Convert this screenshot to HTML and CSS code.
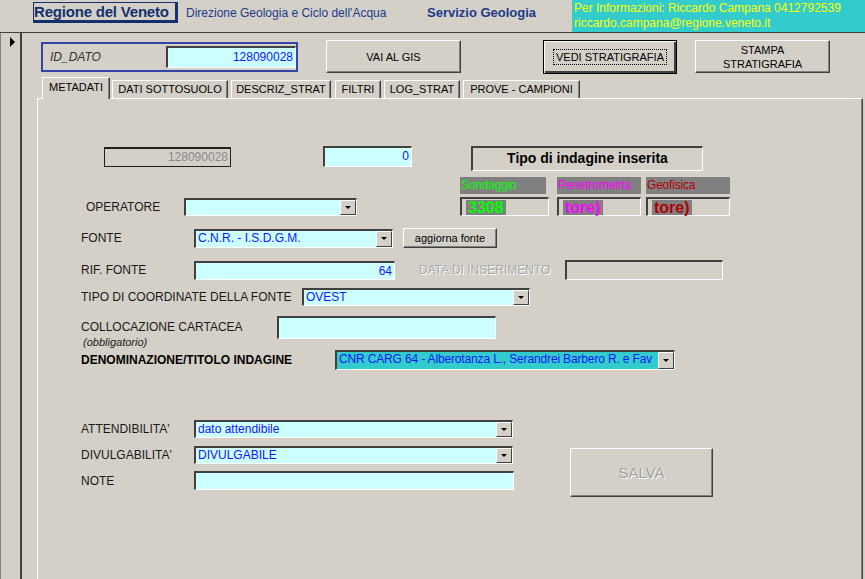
FILE: index.html
```html
<!DOCTYPE html>
<html lang="it">
<head>
    <meta charset="UTF-8">
    <title>Metadati</title>
    <link rel="stylesheet" href="styles.css">
</head>
<body>
<div class="header">
    <div class="brand">Regione del Veneto</div>
    <div class="dept">Direzione Geologia e Ciclo dell'Acqua</div>
    <div class="service">Servizio Geologia</div>
    <div class="info">Per Informazioni: Riccardo Campana 0412792539<br>riccardo.campana@regione.veneto.it</div>
</div>
<div class="main">
    <div class="selector"><span class="selector_arrow"></span></div>
    <div class="form">
        <div class="toolbar">
            <div class="id_box">
                <span class="id_label">ID_DATO</span>
                <span class="field field_id">128090028</span>
            </div>
            <button class="btn btn_gis">VAI AL GIS</button>
            <button class="btn btn_vedi"><span class="focus">VEDI STRATIGRAFIA</span></button>
            <button class="btn btn_stampa">STAMPA<br>STRATIGRAFIA</button>
        </div>
        <ul class="tabs">
            <li class="tab tab_active tab_meta">METADATI</li>
            <li class="tab tab_dati">DATI SOTTOSUOLO</li>
            <li class="tab tab_descr">DESCRIZ_STRAT</li>
            <li class="tab tab_filtri">FILTRI</li>
            <li class="tab tab_log">LOG_STRAT</li>
            <li class="tab tab_prove">PROVE - CAMPIONI</li>
        </ul>
        <div class="panel">
            <div class="row row_ids">
                <span class="field field_off">128090028</span>
                <span class="field field_count">0</span>
                <div class="tipo">Tipo di indagine inserita</div>
            </div>

            <div class="row row_operatore">
                <div class="pair pair_operatore">
                    <span class="lbl lbl_operatore">OPERATORE</span>
                    <div class="combo combo_operatore"><span class="combo_text"></span><span class="combo_drop"></span></div>
                </div>
                <div class="kinds">
                    <div class="kind kind_sond">
                        <div class="kind_head">Sondaggio</div>
                        <div class="kind_value"><span>3308</span></div>
                    </div>
                    <div class="kind kind_pen">
                        <div class="kind_head">Penetrometria</div>
                        <div class="kind_value"><span>tore)</span></div>
                    </div>
                    <div class="kind kind_geo">
                        <div class="kind_head">Geofisica</div>
                        <div class="kind_value"><span>tore)</span></div>
                    </div>
                </div>
            </div>

            <div class="row row_fonte">
                <span class="lbl">FONTE</span>
                <div class="combo combo_fonte"><span class="combo_text">C.N.R. - I.S.D.G.M.</span><span class="combo_drop"></span></div>
                <button class="btn btn_small">aggiorna fonte</button>
            </div>

            <div class="row row_rif">
                <span class="lbl">RIF. FONTE</span>
                <span class="field field_rif">64</span>
                <span class="lbl lbl_off">DATA DI INSERIMENTO</span>
                <span class="field field_data"></span>
            </div>

            <div class="row row_coord">
                <span class="lbl lbl_coord">TIPO DI COORDINATE DELLA FONTE</span>
                <div class="combo combo_coord"><span class="combo_text">OVEST</span><span class="combo_drop"></span></div>
            </div>

            <div class="row row_colloc">
                <div class="lbl lbl_colloc">
                    COLLOCAZIONE CARTACEA
                    <em>(obbligatorio)</em>
                </div>
                <span class="field field_colloc"></span>
            </div>

            <div class="row row_denom">
                <span class="lbl lbl_denom">DENOMINAZIONE/TITOLO INDAGINE</span>
                <div class="combo combo_denom"><span class="combo_text">CNR CARG 64 - Alberotanza L., Serandrei Barbero R. e Fav</span><span class="combo_drop"></span></div>
            </div>

            <div class="bottom">
                <div class="bottom_left">
                    <div class="row row_att">
                        <span class="lbl">ATTENDIBILITA'</span>
                        <div class="combo combo_wide"><span class="combo_text">dato attendibile</span><span class="combo_drop"></span></div>
                    </div>
                    <div class="row row_div">
                        <span class="lbl">DIVULGABILITA'</span>
                        <div class="combo combo_wide"><span class="combo_text">DIVULGABILE</span><span class="combo_drop"></span></div>
                    </div>
                    <div class="row row_note">
                        <span class="lbl">NOTE</span>
                        <span class="field field_note"></span>
                    </div>
                </div>
                <button class="btn btn_salva">SALVA</button>
            </div>
        </div>
    </div>
</div>
</body>
</html>
```

FILE: styles.css
```css
* {
    margin: 0;
    padding: 0;
    box-sizing: border-box;
}
body {
    width: 865px;
    height: 579px;
    overflow: hidden;
    background: #d4d0c8;
    font-family: "Liberation Sans", Arial, sans-serif;
    font-size: 12px;
    color: #1a1a1a;
}
ul, li {
    list-style: none;
}

/* header */
.header {
    display: flex;
    align-items: flex-start;
    height: 33px;
    border-bottom: 1px solid #404040;
}
.header .brand {
    margin: 2px 0 0 33px;
    width: 145px;
    height: 21px;
    line-height: 18px;
    font-size: 15px;
    font-weight: bold;
    letter-spacing: -0.2px;
    color: #13306e;
    border: 1px solid #13306e;
    border-right-width: 3px;
    border-bottom-width: 3px;
}
.header .dept {
    margin: 6px 0 0 8px;
    width: 241px;
    font-size: 12px;
    color: #1c3a8a;
}
.header .service {
    margin-top: 5px;
    font-size: 13px;
    font-weight: bold;
    color: #1c3a8a;
}
.header .info {
    margin-left: auto;
    width: 293px;
    height: 32px;
    padding: 1px 0 0 2px;
    background: #33cccc;
    color: #ffff00;
    font-size: 12px;
    line-height: 15px;
}

/* main area */
.main {
    display: flex;
    height: 546px;
}
.selector {
    width: 22px;
    border-left: 1px solid #808080;
    border-right: 2px solid #404040;
}
.selector_arrow {
    display: block;
    width: 0;
    height: 0;
    margin: 4px 0 0 9px;
    border-left: 5px solid #000;
    border-top: 5px solid transparent;
    border-bottom: 5px solid transparent;
}
.form {
    flex: 1;
    display: flex;
    flex-direction: column;
}

/* common controls */
.btn {
    font-family: "Liberation Sans", Arial, sans-serif;
    font-size: 11px;
    color: #000;
    background: #d4d0c8;
    border: 1px solid;
    border-color: #fff #404040 #404040 #fff;
    box-shadow: inset -1px -1px 0 #808080;
}
.field, .combo {
    display: block;
    border-style: solid;
    border-width: 2px 1px 1px 2px;
    border-color: #404040 #fff #fff #404040;
    background: #ccffff;
    color: #1414ff;
    font-size: 12px;
}
.field {
    text-align: right;
    padding-right: 2px;
    line-height: 16px;
}
.combo {
    display: flex;
}
.combo_text {
    flex: 1;
    padding-left: 2px;
    white-space: nowrap;
    overflow: hidden;
    line-height: 15px;
}
.combo_drop {
    width: 16px;
    display: flex;
    align-items: center;
    justify-content: center;
    background: #d4d0c8;
    border: 1px solid;
    border-color: #fff #404040 #404040 #fff;
}
.combo_drop::after {
    content: "";
    border-top: 3px solid #000;
    border-left: 3px solid transparent;
    border-right: 3px solid transparent;
}
.lbl {
    width: 113px;
    font-size: 12px;
    color: #1a1a1a;
}

/* toolbar */
.toolbar {
    display: flex;
    align-items: flex-start;
    height: 34px;
    margin: 7px 0 0 19px;
}
.id_box {
    display: flex;
    align-items: center;
    margin-top: 2px;
    width: 257px;
    height: 30px;
    border: 2px solid #3343a8;
}
.id_label {
    width: 123px;
    padding-left: 7px;
    font-style: italic;
    color: #303030;
}
.field_id {
    width: 130px;
    height: 22px;
    line-height: 18px;
}
.btn_gis {
    margin-left: 28px;
    width: 135px;
    height: 33px;
}
.btn_vedi {
    margin-left: 82px;
    width: 134px;
    height: 34px;
    border: 1px solid #000;
    box-shadow: inset 1px 1px 0 #fff, inset -2px -2px 0 #404040;
}
.btn_vedi .focus {
    display: inline-block;
    padding: 1px 2px;
    border: 1px dotted #000;
}
.btn_stampa {
    margin-left: 18px;
    width: 135px;
    height: 33px;
    line-height: 14px;
}

/* tabs */
.tabs {
    display: flex;
    align-items: flex-end;
    height: 21px;
    margin: 3px 0 0 20px;
    position: relative;
    z-index: 1;
}
.tab {
    height: 18px;
    margin-left: 3px;
    border: 1px solid;
    border-color: #fff #404040 transparent #fff;
    border-bottom: none;
    box-shadow: inset -1px 0 0 #808080;
    font-size: 11px;
    line-height: 17px;
    text-align: center;
    color: #000;
}
.tab_active {
    height: 22px;
    margin-bottom: -1px;
    margin-left: 0;
    line-height: 18px;
    background: #d4d0c8;
}
.tab_meta { width: 68px; }
.tab_dati { width: 116px; margin-left: 2px; }
.tab_descr { width: 100px; }
.tab_filtri { width: 46px; margin-left: 4px; }
.tab_log { width: 76px; }
.tab_prove { width: 117px; }

.panel {
    flex: 1;
    margin-left: 15px;
    width: 826px;
    border-top: 1px solid #fff;
    border-left: 1px solid #fff;
    border-right: 1px solid #404040;
    box-shadow: inset -1px 0 0 #808080;
}

/* panel rows */
.row {
    display: flex;
    align-items: center;
    margin-left: 43px;
}
.row_ids {
    align-items: flex-start;
    margin: 47px 0 0 66px;
    height: 25px;
}
.field_off {
    margin-top: 1px;
    width: 127px;
    height: 20px;
    border: 1px solid #202020;
    border-top-width: 2px;
    background: #d4d0c8;
    color: #8a8a8a;
}
.field_count {
    margin-left: 92px;
    width: 89px;
    height: 21px;
}
.tipo {
    margin-left: 59px;
    width: 232px;
    height: 25px;
    border-style: solid;
    border-width: 2px 1px 1px 2px;
    border-color: #404040 #fff #fff #404040;
    font-size: 14px;
    font-weight: bold;
    line-height: 20px;
    text-align: center;
    color: #000;
}

.row_operatore {
    align-items: flex-end;
    margin: 6px 0 0 48px;
}
.pair {
    display: flex;
    align-items: center;
}
.lbl_operatore {
    width: 98px;
}
.combo_operatore {
    width: 173px;
    height: 18px;
}
.kinds {
    display: flex;
    margin-left: 103px;
}
.kind_sond { width: 89px; }
.kind_pen { width: 84px; margin-left: 8px; }
.kind_geo { width: 84px; margin-left: 5px; }
.kind_head {
    height: 17px;
    padding-left: 1px;
    background: #808080;
    font-size: 12px;
    line-height: 17px;
    letter-spacing: -0.2px;
}
.kind_sond .kind_head { width: 86px; color: #00ff00; }
.kind_pen .kind_head { color: #ff00ff; }
.kind_geo .kind_head { color: #b00000; }
.kind_value {
    height: 19px;
    margin-top: 3px;
    padding: 1px 0 0 4px;
    border-style: solid;
    border-width: 2px 1px 1px 2px;
    border-color: #404040 #fff #fff #404040;
}
.kind_value span {
    display: inline-block;
    height: 15px;
    padding: 0 2px;
    background: #808080;
    font-size: 16px;
    font-weight: bold;
    line-height: 15px;
}
.kind_sond .kind_value span { color: #00ff00; }
.kind_pen .kind_value span { color: #ff00ff; }
.kind_geo .kind_value span { color: #b00000; }

.row_fonte {
    margin-top: 12px;
    height: 20px;
}
.combo_fonte {
    width: 199px;
    height: 19px;
}
.btn_small {
    margin-left: 10px;
    width: 94px;
    height: 20px;
}

.row_rif {
    margin-top: 12px;
    height: 20px;
}
.field_rif {
    width: 201px;
    height: 19px;
}
.lbl_off {
    margin-left: 24px;
    width: 146px;
    color: #a8a8a8;
    text-shadow: 1px 1px 0 #fff;
}
.field_data {
    width: 158px;
    height: 20px;
    background: #d4d0c8;
}

.row_coord {
    margin-top: 8px;
    height: 18px;
}
.lbl_coord {
    width: 221px;
}
.combo_coord {
    width: 228px;
    height: 18px;
}

.row_colloc {
    align-items: flex-start;
    margin-top: 10px;
    height: 33px;
}
.lbl_colloc {
    width: 196px;
    padding-top: 3px;
    line-height: 16px;
}
.lbl_colloc em {
    display: block;
    margin-left: 2px;
    font-size: 11px;
    line-height: 14px;
}
.field_colloc {
    width: 219px;
    height: 23px;
}

.row_denom {
    margin-top: 1px;
    height: 20px;
}
.lbl_denom {
    width: 254px;
    font-weight: bold;
    color: #000;
}
.combo_denom {
    width: 340px;
    height: 20px;
    background: #33cccc;
}
.combo_denom .combo_text {
    letter-spacing: -0.15px;
}

.bottom {
    display: flex;
    align-items: flex-start;
    margin-top: 50px;
}
.row_att {
    height: 18px;
}
.row_div {
    margin-top: 8px;
    height: 18px;
}
.row_note {
    margin-top: 7px;
    height: 19px;
}
.combo_wide {
    width: 319px;
    height: 18px;
}
.field_note {
    width: 320px;
    height: 19px;
}
.btn_salva {
    margin: 28px 0 0 56px;
    width: 143px;
    height: 49px;
    font-size: 15px;
    color: #a0a0a0;
    text-shadow: 1px 1px 0 #fff;
}
```
